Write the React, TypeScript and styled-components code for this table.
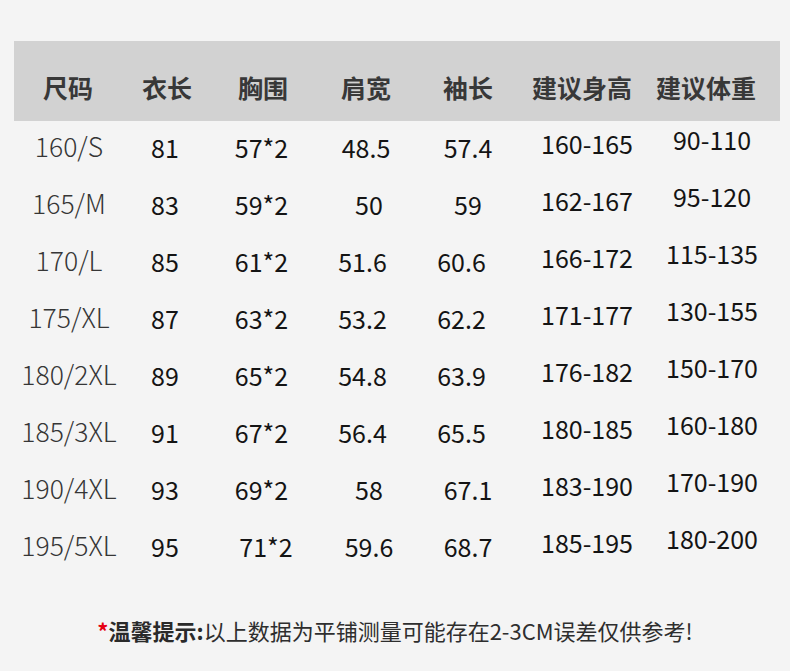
import styled, { createGlobalStyle } from "styled-components";

const GlobalStyle = createGlobalStyle`
  html, body {
    margin: 0;
    padding: 0;
    background: #f4f4f4;
  }

  body {
    font-family: "Noto Sans CJK SC", "Noto Sans", sans-serif;
  }
`;

/** column widths chosen so the cell centres sit where the chart has them */
const COLUMNS = "110px 82px 111px 98px 106px 132px 118px";

interface Cell {
  text: string;
  /** horizontal nudge in px, the source chart is not perfectly aligned */
  dx?: number;
}

const HEADERS: Cell[] = [
  { text: "尺码", dx: -1 },
  { text: "衣长", dx: 2 },
  { text: "胸围", dx: 1.5 },
  { text: "肩宽" },
  { text: "袖长" },
  { text: "建议身高", dx: -5 },
  { text: "建议体重", dx: -6 },
];

const c = (text: string, dx?: number): Cell => ({ text, dx });

const ROWS: Cell[][] = [
  [c("160/S"), c("81"), c("57*2"), c("48.5"), c("57.4"), c("160-165"), c("90-110")],
  [c("165/M"), c("83"), c("59*2"), c("50", 3), c("59"), c("162-167"), c("95-120")],
  [c("170/L"), c("85"), c("61*2"), c("51.6", -3.5), c("60.6", -6.5), c("166-172"), c("115-135")],
  [c("175/XL"), c("87"), c("63*2"), c("53.2", -3.5), c("62.2", -6.5), c("171-177"), c("130-155")],
  [c("180/2XL"), c("89"), c("65*2"), c("54.8", -3.5), c("63.9", -6.5), c("176-182"), c("150-170")],
  [c("185/3XL"), c("91"), c("67*2"), c("56.4", -3.5), c("65.5", -6.5), c("180-185"), c("160-180")],
  [c("190/4XL"), c("93"), c("69*2"), c("58", 3), c("67.1"), c("183-190"), c("170-190")],
  [c("195/5XL"), c("95"), c("71*2", 4.5), c("59.6", 3), c("68.7"), c("185-195"), c("180-200")],
];

/** vertical nudge per column, the last two columns sit higher in the chart */
const COLUMN_DY = [-1.5, 0, 0, 0, 0, -4, -8];

const Page = styled.div`
  min-height: 671px;
  padding-top: 41px;
  box-sizing: border-box;
`;

const Table = styled.div`
  margin: 0 10px 0 14px;
`;

const HeaderRow = styled.div`
  display: grid;
  grid-template-columns: ${COLUMNS};
  align-items: center;
  height: 80px;
  padding: 12px 9px 0 0;
  box-sizing: border-box;
  background: #d2d2d2;
`;

const HeaderCell = styled.div<{ $dx: number }>`
  text-align: center;
  font-size: 25px;
  font-weight: 700;
  line-height: 1;
  color: #383838;
  transform: translateX(${({ $dx }) => $dx}px);
`;

const BodyRow = styled.div`
  display: grid;
  grid-template-columns: ${COLUMNS};
  align-items: center;
  height: 57px;
  padding: 0 9px 5px 0;
  box-sizing: border-box;
`;

const BodyCell = styled.div<{ $dx: number; $dy: number; $first: boolean }>`
  text-align: center;
  font-size: ${({ $first }) => ($first ? "26.5px" : "25px")};
  line-height: 1;
  white-space: nowrap;
  font-weight: ${({ $first }) => ($first ? 300 : 400)};
  color: ${({ $first }) => ($first ? "#363636" : "#141414")};
  transform: translate(${({ $dx }) => $dx}px, ${({ $dy }) => $dy}px);
`;

const Notice = styled.p`
  margin: 38px 0 0;
  text-align: center;
  font-size: 22px;
  line-height: 30px;
  color: #2e2e2e;
`;

const Star = styled.span`
  color: #e60012;
  font-weight: 700;
`;

const NoticeLabel = styled.span`
  font-weight: 700;
  color: #2a2a2a;
`;

const App = () => {
  return (
    <Page>
      <GlobalStyle />
      <Table>
        <HeaderRow>
          {HEADERS.map((h) => (
            <HeaderCell key={h.text} $dx={h.dx ?? 0}>
              {h.text}
            </HeaderCell>
          ))}
        </HeaderRow>
        {ROWS.map((row) => (
          <BodyRow key={row[0].text}>
            {row.map((cell, i) => (
              <BodyCell
                key={`${row[0].text}-${i}`}
                $dx={cell.dx ?? 0}
                $dy={COLUMN_DY[i]}
                $first={i === 0}
              >
                {cell.text}
              </BodyCell>
            ))}
          </BodyRow>
        ))}
      </Table>
      <Notice>
        <Star>*</Star>
        <NoticeLabel>温馨提示:</NoticeLabel>
        以上数据为平铺测量可能存在2-3CM误差仅供参考!
      </Notice>
    </Page>
  );
};

export default App;
